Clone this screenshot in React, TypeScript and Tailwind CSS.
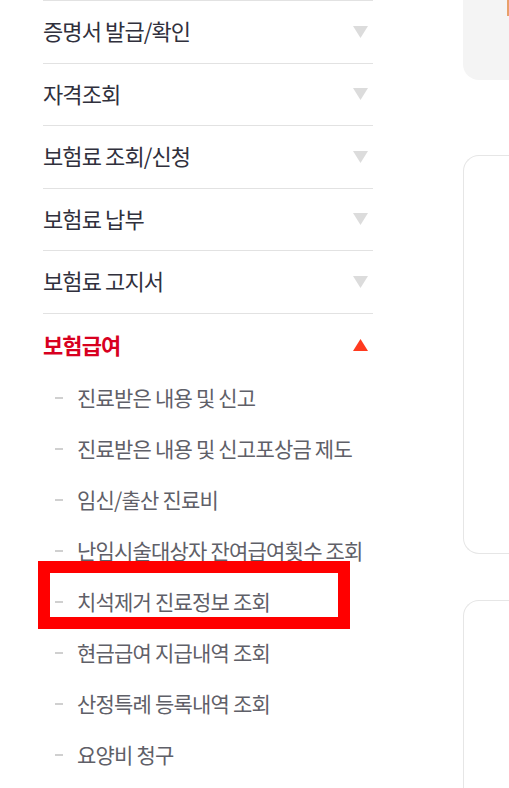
import React from "react";

const mainItems = ["증명서 발급/확인", "자격조회", "보험료 조회/신청", "보험료 납부", "보험료 고지서"];
const subItems = [
  "진료받은 내용 및 신고",
  "진료받은 내용 및 신고포상금 제도",
  "임신/출산 진료비",
  "난임시술대상자 잔여급여횟수 조회",
  "치석제거 진료정보 조회",
  "현금급여 지급내역 조회",
  "산정특례 등록내역 조회",
  "요양비 청구",
];

function Down() {
  return (
    <svg width="15" height="12" viewBox="0 0 15 12">
      <polygon points="0,0 15,0 7.5,12" fill="#dcdcdc" />
    </svg>
  );
}
function Up() {
  return (
    <svg width="15" height="12" viewBox="0 0 15 12">
      <polygon points="0,12 15,12 7.5,0" fill="#ff3a1f" />
    </svg>
  );
}

export default function App() {
  return (
    <div
      className="relative flex w-[509px] h-[788px] overflow-hidden bg-white"
      style={{ fontFamily: '"Noto Sans CJK KR", "Noto Sans", sans-serif' }}
    >
      <div className="ml-[43px] w-[330px] shrink-0">
        <div className="border-t border-[#e2e2e2]">
          {mainItems.map((t) => (
            <div
              key={t}
              className="h-[62.5px] border-b border-[#e2e2e2] flex items-center justify-between pr-[5px]"
            >
              <span className="text-[22px] tracking-[-0.9px] text-[#30303c] -mt-[2px]">{t}</span>
              <Down />
            </div>
          ))}
          <div className="h-[62px] flex items-center justify-between pr-[5px]">
            <span className="text-[22px] tracking-[-0.9px] font-bold text-[#d8001f]">보험급여</span>
            <Up />
          </div>
        </div>
        <div className="flex flex-col -mt-[3px]">
          {subItems.map((t) => (
            <div key={t} className="h-[51px] flex items-center">
              <span className="ml-[12px] w-[8px] h-[2px] bg-[#d0d0d0] shrink-0" />
              <span className="ml-[14px] text-[21px] tracking-[-0.8px] text-[#5f6068] whitespace-nowrap">
                {t}
              </span>
            </div>
          ))}
        </div>
      </div>
      <div className="ml-[90px] flex-1 flex flex-col">
        <div className="h-[80px] bg-[#f4f4f4] rounded-bl-[16px] flex justify-end">
          <div className="w-[2px] h-[16px] bg-[#e8a06a]" />
        </div>
        <div className="mt-[75px] h-[399px] border border-r-0 border-[#e6e6e6] rounded-l-[16px]" />
        <div className="mt-[46px] flex-1 border border-r-0 border-b-0 border-[#e6e6e6] rounded-tl-[16px]" />
      </div>
      <div className="absolute left-[38px] top-[561px] w-[312px] h-[68px] border-[12px] border-[#ff0000]" />
    </div>
  );
}
